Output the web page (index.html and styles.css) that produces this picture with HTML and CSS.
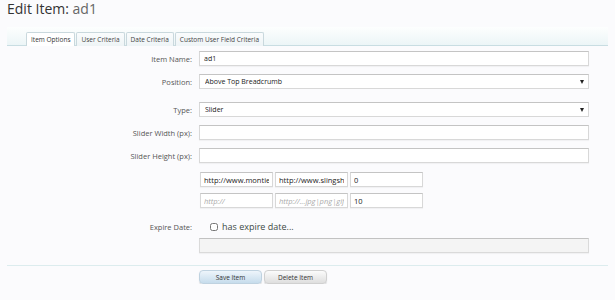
FILE: index.html
```html
<!DOCTYPE html>
<html lang="en">
<head>
    <meta charset="UTF-8">
    <title>Edit Item: ad1</title>
    <link rel="stylesheet" href="styles.css">
</head>
<body>
    <div class="page">
        <h1 class="title">Edit Item: <span class="title-name">ad1</span></h1>

        <div class="tabs">
            <a class="tab tab-active">Item Options</a>
            <a class="tab">User Criteria</a>
            <a class="tab">Date Criteria</a>
            <a class="tab">Custom User Field Criteria</a>
        </div>

        <form class="form">
            <div class="row row-name">
                <label class="label">Item Name:</label>
                <input class="input" type="text" value="ad1">
            </div>
            <div class="row row-position">
                <label class="label">Position:</label>
                <div class="select-wrap">
                    <select class="select"><option>Above Top Breadcrumb</option></select>
                    <span class="select-arrow"></span>
                </div>
            </div>
            <div class="row row-type">
                <label class="label">Type:</label>
                <div class="select-wrap">
                    <select class="select"><option>Slider</option></select>
                    <span class="select-arrow"></span>
                </div>
            </div>
            <div class="row row-size">
                <label class="label">Slider Width (px):</label>
                <input class="input" type="text">
            </div>
            <div class="row row-size row-size-last">
                <label class="label">Slider Height (px):</label>
                <input class="input" type="text">
            </div>

            <div class="row row-slides">
                <span class="label"></span>
                <div class="slide-inputs">
                    <input class="input input-small" type="text" value="http://www.montiesworld.com">
                    <input class="input input-small" type="text" value="http://www.slingshot.com">
                    <input class="input input-small" type="text" value="0">
                </div>
            </div>
            <div class="row row-slides-new">
                <span class="label"></span>
                <div class="slide-inputs">
                    <input class="input input-small" type="text" placeholder="http://">
                    <input class="input input-small" type="text" placeholder="http://...jpg|png|gif">
                    <input class="input input-small" type="text" value="10">
                </div>
            </div>

            <div class="row row-expire">
                <label class="label">Expire Date:</label>
                <label class="check">
                    <input class="check-box" type="checkbox">
                    <span>has expire date...</span>
                </label>
            </div>
            <div class="row row-date">
                <span class="label"></span>
                <input class="input input-disabled" type="text" disabled>
            </div>
        </form>

        <div class="actions">
            <button class="btn btn-save" type="button">Save Item</button>
            <button class="btn btn-delete" type="button">Delete Item</button>
        </div>
    </div>
</body>
</html>
```

FILE: styles.css
```css
* {
    margin: 0;
    padding: 0;
    box-sizing: border-box;
}

body {
    background: #fbfbfd;
    font-family: "Open Sans", "DejaVu Sans", sans-serif;
    color: #555;
}

.page {
    padding: 0 7px;
}

.title {
    font-size: 14px;
    line-height: 18px;
    font-weight: normal;
    color: #333;
}

.title-name {
    color: #666;
}

/* tab strip */
.tabs {
    margin-top: 9px;
    height: 19px;
    padding-left: 19px;
    display: flex;
    align-items: flex-end;
    gap: 1px;
    background: linear-gradient(to bottom, #fdfefe, #ecf5f7);
    border-bottom: 1px solid #c8dde2;
}

.tab {
    height: 14px;
    margin-bottom: -1px;
    padding: 0 4px;
    font-size: 6.5px;
    line-height: 13px;
    color: #444;
    background: linear-gradient(to bottom, #fafcfd, #eef4f6);
    border: 1px solid #c9d8dd;
    border-bottom: none;
    border-radius: 2px 2px 0 0;
}

.tab-active {
    background: #fff;
    color: #333;
}

/* form rows */
.form {
    margin-top: 5px;
}

.row {
    display: flex;
    align-items: center;
    gap: 7px;
    height: 15px;
    margin-bottom: 8px;
}

.row-position {
    margin-bottom: 13px;
}

.row-size-last {
    margin-bottom: 9px;
}

.row-slides {
    margin-bottom: 6px;
}

.row-slides-new {
    margin-bottom: 12px;
}

.row-expire {
    height: 13px;
    margin-bottom: 5px;
}

.row-date {
    margin-bottom: 12px;
}

.label {
    width: 185px;
    flex-shrink: 0;
    text-align: right;
    font-size: 7.5px;
    color: #555;
}

.input {
    display: block;
    width: 390px;
    height: 15px;
    padding: 0 4px;
    font-family: "Open Sans", "DejaVu Sans", sans-serif;
    font-size: 7px;
    color: #222;
    background: #fff;
    border: 1px solid #d8d8d8;
    border-top-color: #c4c4c4;
    box-shadow: 0 1px 1px rgba(0, 0, 0, 0.04);
    outline: none;
}

.select-wrap {
    position: relative;
    width: 390px;
    height: 15px;
}

.select {
    display: block;
    width: 100%;
    height: 15px;
    padding: 0 5px;
    appearance: none;
    -webkit-appearance: none;
    font-family: "Open Sans", "DejaVu Sans", sans-serif;
    font-size: 7px;
    line-height: 13px;
    color: #222;
    background: #fff;
    border: 1px solid #d8d8d8;
    border-top-color: #c4c4c4;
    border-radius: 0;
    outline: none;
}

.select-arrow {
    position: absolute;
    right: 5px;
    top: 6px;
    border-left: 2.5px solid transparent;
    border-right: 2.5px solid transparent;
    border-top: 4px solid #222;
}

.slide-inputs {
    display: flex;
    gap: 2px;
    padding-left: 1px;
}

.input-small {
    width: 73px;
    padding: 0 3px;
    font-size: 7.5px;
}

.input-small::placeholder {
    font-style: italic;
    color: #aaa;
}

.check {
    display: flex;
    align-items: center;
    gap: 4px;
    margin-left: 11px;
    font-size: 9px;
    color: #3d4a44;
}

.check-box {
    width: 8px;
    height: 8px;
    margin: 0;
}

.input-disabled {
    background: #f4f4f4;
    border-color: #dadada;
    border-top-color: #c2c2c2;
}

/* buttons */
.actions {
    border-top: 1px solid #dcecee;
    padding: 4px 0 0 192px;
    display: flex;
    gap: 2px;
}

.btn {
    width: 63px;
    height: 14px;
    font-family: "Open Sans", "DejaVu Sans", sans-serif;
    font-size: 6.5px;
    color: #333;
    border: 1px solid #d0d0d0;
    border-radius: 4px;
    box-shadow: 0 1px 1px rgba(0, 0, 0, 0.15);
    cursor: pointer;
}

.btn-save {
    background: linear-gradient(to bottom, #eef5fb, #c6dcec);
    border-color: #bfd2e0;
}

.btn-delete {
    background: linear-gradient(to bottom, #fbfbfb, #dedede);
}
```
